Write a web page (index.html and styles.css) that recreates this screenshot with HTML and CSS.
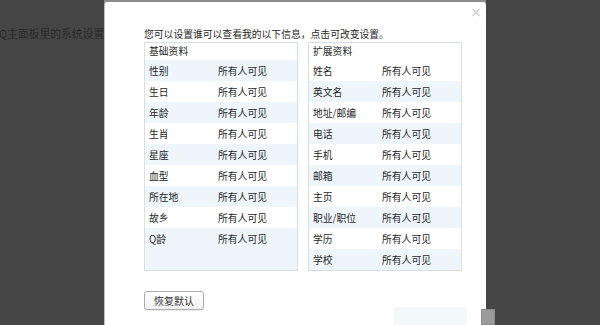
FILE: index.html
```html
<!DOCTYPE html>
<html lang="zh-CN">
<head>
  <meta charset="UTF-8">
  <title>资料权限设置</title>
  <link rel="stylesheet" href="styles.css">
</head>
<body>
  <div class="page">
    <p class="page-tip">Q主面板里的系统设置</p>
  </div>

  <div class="top-strip"></div>

  <div class="dialog">
    <span class="close">&times;</span>
    <p class="intro">您可以设置谁可以查看我的以下信息，点击可改变设置。</p>

    <div class="panels">
      <div class="panel panel-base">
        <div class="panel-title">基础资料</div>
        <div class="row"><span>性别</span><span>所有人可见</span></div>
        <div class="row"><span>生日</span><span>所有人可见</span></div>
        <div class="row"><span>年龄</span><span>所有人可见</span></div>
        <div class="row"><span>生肖</span><span>所有人可见</span></div>
        <div class="row"><span>星座</span><span>所有人可见</span></div>
        <div class="row"><span>血型</span><span>所有人可见</span></div>
        <div class="row"><span>所在地</span><span>所有人可见</span></div>
        <div class="row"><span>故乡</span><span>所有人可见</span></div>
        <div class="row"><span>Q龄</span><span>所有人可见</span></div>
      </div>

      <div class="panel panel-ext">
        <div class="panel-title">扩展资料</div>
        <div class="row"><span>姓名</span><span>所有人可见</span></div>
        <div class="row"><span>英文名</span><span>所有人可见</span></div>
        <div class="row"><span>地址/邮编</span><span>所有人可见</span></div>
        <div class="row"><span>电话</span><span>所有人可见</span></div>
        <div class="row"><span>手机</span><span>所有人可见</span></div>
        <div class="row"><span>邮箱</span><span>所有人可见</span></div>
        <div class="row"><span>主页</span><span>所有人可见</span></div>
        <div class="row"><span>职业/职位</span><span>所有人可见</span></div>
        <div class="row"><span>学历</span><span>所有人可见</span></div>
        <div class="row"><span>学校</span><span>所有人可见</span></div>
      </div>
    </div>

    <button class="reset-btn">恢复默认</button>

    <div class="ghost-tip"></div>
  </div>

  <div class="scroll-thumb"></div>
</body>
</html>
```

FILE: styles.css
```css
* {
  margin: 0;
  padding: 0;
  box-sizing: border-box;
}

body {
  width: 600px;
  height: 325px;
  overflow: hidden;
  background-color: #454545;
  font-family: "Noto Sans CJK SC", "Liberation Sans", sans-serif;
  font-size: 9.8px;
  color: #1f1f1f;
  position: relative;
}

.page {
  padding-top: 26px;
}

.page-tip {
  margin-left: -1px;
  font-size: 10.8px;
  line-height: 14px;
  color: #2a2a2a;
  white-space: nowrap;
}

.top-strip {
  position: absolute;
  left: 104px;
  top: 0;
  width: 382px;
  height: 3px;
  background-color: #8d8d8d;
}

.dialog {
  position: absolute;
  left: 104px;
  top: 2px;
  width: 382px;
  height: 323px;
  background-color: #fff;
  border-left: 1px solid #bcbcbc;
  border-radius: 3px 3px 0 0;
  padding: 25px 0 0 39px;
}

.close {
  position: absolute;
  right: 4px;
  top: 3px;
  font-family: "DejaVu Sans", sans-serif;
  font-size: 14px;
  line-height: 14px;
  color: #c8cdd2;
}

.intro {
  line-height: 14px;
  margin-bottom: 1px;
  white-space: nowrap;
}

.panels {
  display: flex;
  gap: 10px;
}

.panel {
  width: 154px;
  height: 229px;
  border: 1px solid #d6dfe6;
  display: flex;
  flex-direction: column;
}

.panel-base {
  background-color: #eef6fc;
}

.panel-title {
  height: 17px;
  line-height: 16px;
  padding-left: 4px;
  background-color: #fff;
}

.row {
  height: 21px;
  display: grid;
  grid-template-columns: 69px 1fr;
  align-items: center;
  padding-left: 4px;
  white-space: nowrap;
}

.panel-base .row:nth-child(odd) {
  background-color: #fff;
}

.panel-ext .row {
  background-color: #fff;
}

.panel-ext .row:nth-child(odd) {
  background-color: #eef6fc;
}

.reset-btn {
  margin-top: 20px;
  width: 60px;
  height: 19px;
  font-family: inherit;
  font-size: 10px;
  color: #333;
  background: linear-gradient(#fff, #f1f1f1);
  border: 1px solid #ababab;
  border-radius: 3px;
  box-shadow: 0 1px 1px rgba(0, 0, 0, 0.08);
  line-height: 16px;
}

.ghost-tip {
  position: absolute;
  left: 289px;
  top: 305px;
  width: 73px;
  height: 18px;
  background-color: #f3f9fb;
}

.scroll-thumb {
  position: absolute;
  left: 481px;
  top: 309px;
  width: 14px;
  height: 16px;
  background-color: #9b9b9b;
  border: 1px solid #8a8a8a;
}
```
